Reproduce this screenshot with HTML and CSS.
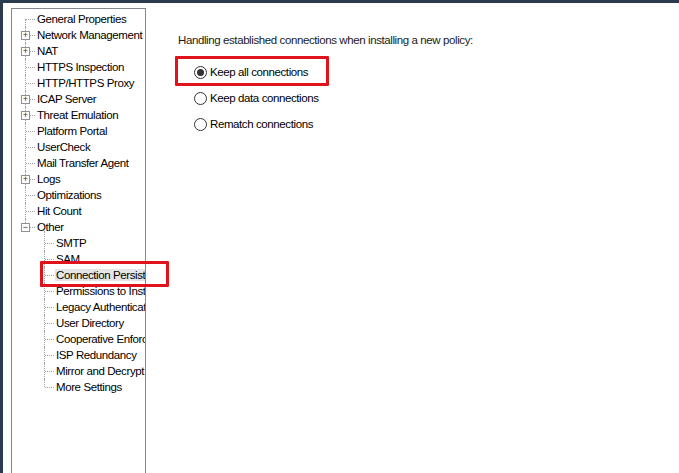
FILE: index.html
```html
<!DOCTYPE html>
<html lang="en">
<head>
    <meta charset="UTF-8">
    <title>Connection Persistence</title>
    <link rel="stylesheet" href="styles.css">
</head>
<body>
    <div class="window">
        <!-- Navigation tree -->
        <div class="tree">
            <div class="row l0 first"><span class="label">General Properties</span></div>
            <div class="row l0"><span class="exp">+</span><span class="label">Network Management</span></div>
            <div class="row l0"><span class="exp">+</span><span class="label">NAT</span></div>
            <div class="row l0"><span class="label">HTTPS Inspection</span></div>
            <div class="row l0"><span class="label">HTTP/HTTPS Proxy</span></div>
            <div class="row l0"><span class="exp">+</span><span class="label">ICAP Server</span></div>
            <div class="row l0"><span class="exp">+</span><span class="label">Threat Emulation</span></div>
            <div class="row l0"><span class="label">Platform Portal</span></div>
            <div class="row l0"><span class="label">UserCheck</span></div>
            <div class="row l0"><span class="label">Mail Transfer Agent</span></div>
            <div class="row l0"><span class="exp">+</span><span class="label">Logs</span></div>
            <div class="row l0"><span class="label">Optimizations</span></div>
            <div class="row l0"><span class="label">Hit Count</span></div>
            <div class="row l0 last"><span class="exp">&minus;</span><span class="label">Other</span></div>
            <div class="row l1 first"><span class="label">SMTP</span></div>
            <div class="row l1"><span class="label">SAM</span></div>
            <div class="row l1 selected"><span class="label">Connection Persistence</span></div>
            <div class="row l1"><span class="label">Permissions to Install</span></div>
            <div class="row l1"><span class="label">Legacy Authentication</span></div>
            <div class="row l1"><span class="label">User Directory</span></div>
            <div class="row l1"><span class="label">Cooperative Enforcement</span></div>
            <div class="row l1"><span class="label">ISP Redundancy</span></div>
            <div class="row l1"><span class="label">Mirror and Decrypt</span></div>
            <div class="row l1 last"><span class="label">More Settings</span></div>
        </div>

        <!-- Settings page -->
        <div class="content">
            <p class="caption">Handling established connections when installing a new policy:</p>
            <label class="radio"><span class="dot checked"></span>Keep all connections</label>
            <label class="radio"><span class="dot"></span>Keep data connections</label>
            <label class="radio"><span class="dot"></span>Rematch connections</label>
        </div>

        <!-- annotation boxes -->
        <div class="mark mark-tree"></div>
        <div class="mark mark-radio"></div>
    </div>
</body>
</html>
```
FILE: styles.css
```css
/* General Styles */
body {
    margin: 0;
    font-family: "Liberation Sans", Arial, sans-serif;
    font-size: 11.5px;
    letter-spacing: -0.4px;
    color: #000;
    background-color: #2b3a4f;
    overflow: hidden;
}

.window {
    position: relative;
    display: flex;
    align-items: flex-start;
    margin: 3px 0 0 3px;
    height: 470px;
    background-color: #fff;
    overflow: hidden;
}

/* Tree */
.tree {
    margin: 5px 0 0 8px;
    width: 133px;
    height: 500px;
    padding-top: 2px;
    border: 1px solid #828790;
    overflow: hidden;
    flex-shrink: 0;
}

.row {
    position: relative;
    height: 16px;
    line-height: 16px;
    white-space: nowrap;
}

.row.l0 {
    padding-left: 24px;
}

.row.l1 {
    padding-left: 43px;
}

.row::before {
    content: "";
    position: absolute;
    top: 0;
    height: 16px;
    border-left: 1px dotted #a0a0a0;
}

.row.first::before {
    top: 8px;
    height: 8px;
}

.row.last::before {
    height: 8px;
}

.row::after {
    content: "";
    position: absolute;
    top: 8px;
    width: 9px;
    border-top: 1px dotted #a0a0a0;
}

.row.l0::before { left: 13px; }
.row.l0::after { left: 14px; }
.row.l1::before { left: 32px; }
.row.l1::after { left: 33px; }

.row.l1.first::before {
    top: -4px;
    height: 20px;
}

.label {
    padding: 0 1px;
}

.row.selected .label {
    background-color: #e5e5e5;
    padding-right: 40px;
}

.exp {
    position: absolute;
    z-index: 1;
    left: 9px;
    top: 4px;
    width: 7px;
    height: 7px;
    border: 1px solid #919191;
    background-color: #fff;
    font-size: 9px;
    letter-spacing: 0;
    line-height: 7px;
    text-align: center;
    color: #333;
}

/* Content */
.content {
    display: flex;
    flex-direction: column;
    padding: 29px 0 0 32px;
}

.caption {
    margin: 0 0 11px 0;
    line-height: 16px;
    color: #1a1a1a;
}

.radio {
    display: flex;
    align-items: center;
    height: 26px;
    padding-left: 16px;
}

.dot {
    box-sizing: border-box;
    width: 13px;
    height: 13px;
    margin-right: 3px;
    border: 1px solid #333;
    border-radius: 50%;
    background-color: #fff;
    display: flex;
    align-items: center;
    justify-content: center;
}

.dot.checked::after {
    content: "";
    width: 7px;
    height: 7px;
    border-radius: 50%;
    background-color: #333;
}

/* Red annotation frames */
.mark {
    position: absolute;
    border: 3px solid #e0121c;
    border-radius: 1px;
}

.mark-tree {
    left: 37px;
    top: 258px;
    width: 123px;
    height: 20px;
}

.mark-radio {
    left: 172px;
    top: 53px;
    width: 148px;
    height: 24px;
}
```
